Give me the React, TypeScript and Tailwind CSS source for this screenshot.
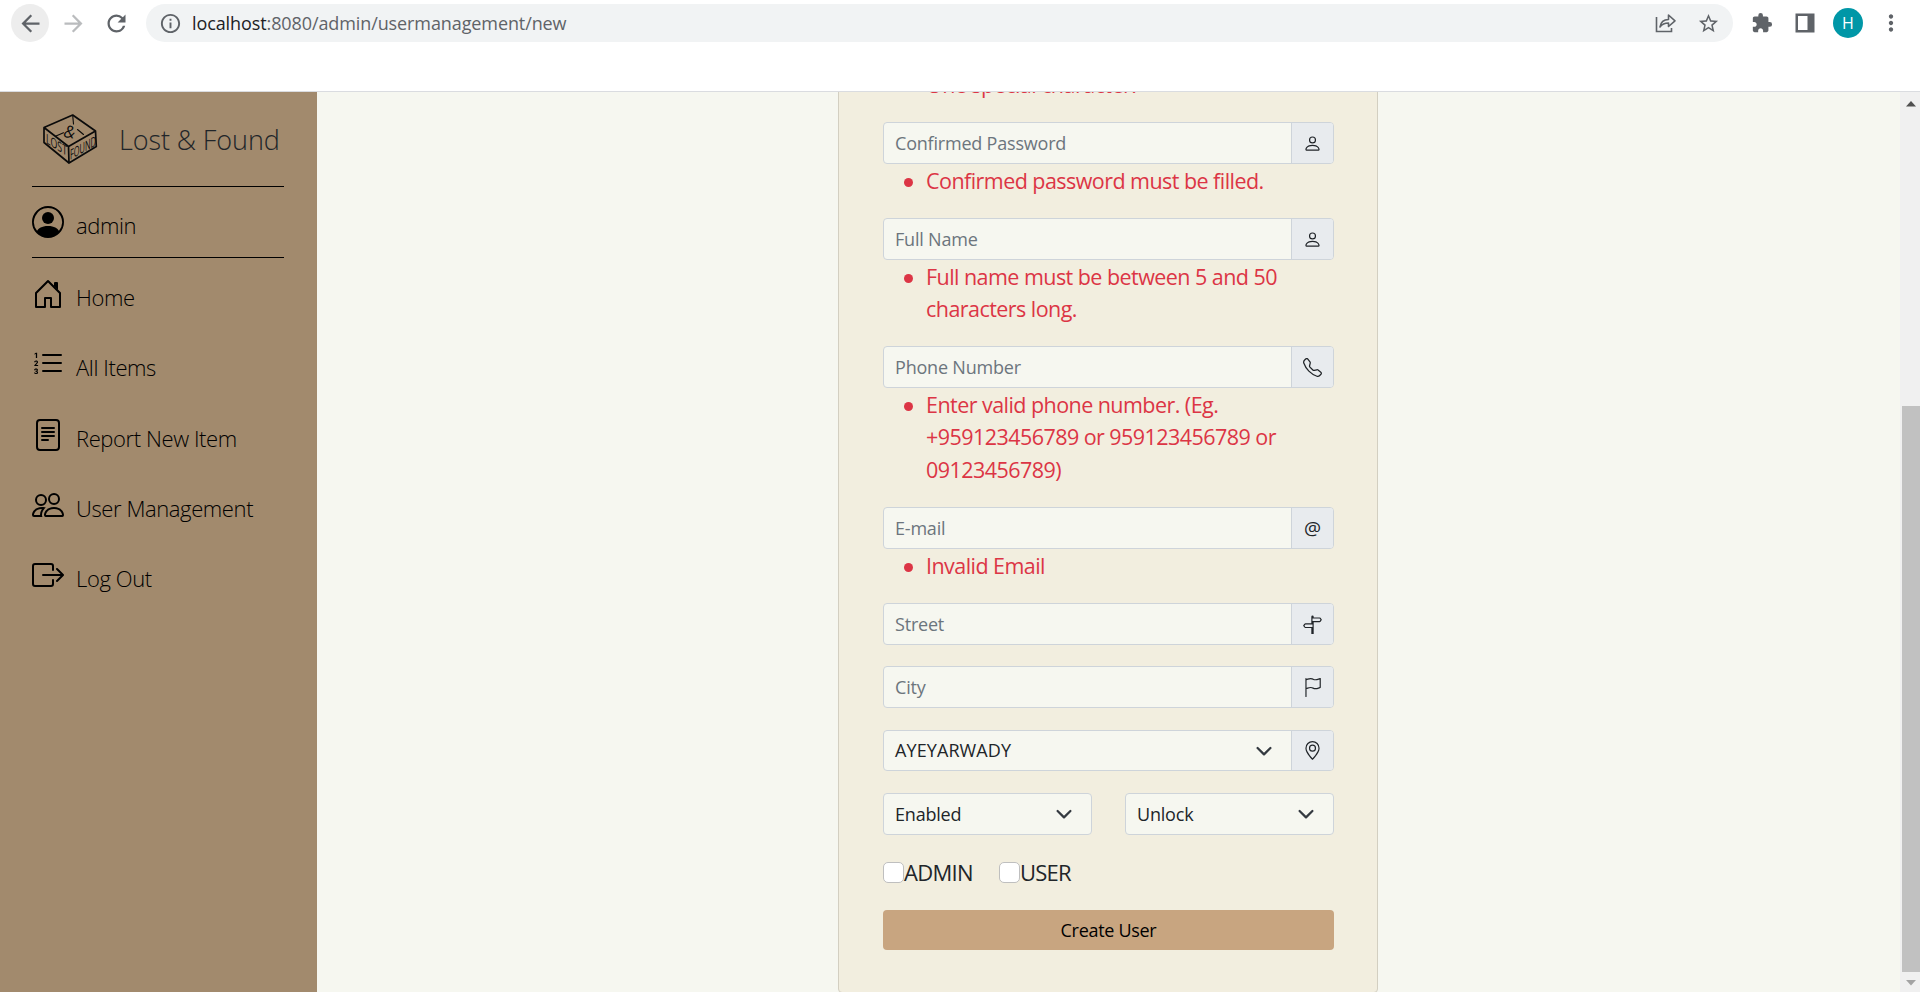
import type { ReactNode } from "react";
import {
  BsPersonCircle, BsListOl, BsFileText, BsPeople, BsBoxArrowRight, BsPerson,
  BsTelephone, BsSignpostSplit, BsFlag, BsGeoAlt,
} from "react-icons/bs";
import { MdArrowBack, MdArrowForward, MdRefresh, MdInfoOutline, MdStarBorder, MdExtension, MdMoreVert } from "react-icons/md";

function ShareIcon() {
  return (
    <svg width="22" height="22" viewBox="0 0 22 22" fill="none" stroke="#5f6368" strokeWidth="1.6">
      <path d="M1.500 5v14.500h15V16" />
      <path d="M5 15c.8-5 4-7.500 8.500-7.500V3l6.500 5.800-6.500 5.700V11c-3.800 0-6.500 1.200-8.500 4z" strokeLinejoin="round" />
    </svg>
  );
}

function SidePanelIcon() {
  return (
    <svg width="20" height="20" viewBox="0 0 20 20" fill="#5f6368">
      <path fillRule="evenodd" d="M.5.5h19v19H.5zM3 3v14h9.500V3z" />
    </svg>
  );
}

function HouseIcon() {
  return (
    <svg width="32" height="32" viewBox="0 0 16 16" fill="currentColor">
      <path d="M7.646 1.146a.5.5 0 0 1 .708 0l6 6a.5.5 0 0 1 .146.354v7a.5.5 0 0 1-.5.5H9.500a.5.5 0 0 1-.5-.5v-4H7v4a.5.5 0 0 1-.5.5H2a.5.5 0 0 1-.5-.5v-7a.5.5 0 0 1 .146-.354l6-6zM2.500 7.707V14H6v-4a.5.5 0 0 1 .5-.5h3a.5.5 0 0 1 .5.5v4h3.500V7.707L8 2.207l-5.500 5.500z" />
      <path d="M13 2.500V6l-2-2V2.500a.5.5 0 0 1 .5-.5h1a.5.5 0 0 1 .5.5z" />
    </svg>
  );
}

function Logo() {
  return (
    <svg width="56" height="52" viewBox="42 113 56 52" overflow="visible" fill="none" stroke="#0b0b0b" strokeWidth="1.700" strokeLinejoin="round" strokeLinecap="round">
      <path d="M44 127.500 72.700 115 95.500 131 68.500 146.500zM44 127.500v15L69 163l-.5-16.500M95.500 131l.8 15.500L69 163" />
      <path d="M72.700 115.500 73.500 124M56 136l7.500-3.200M77.500 129.500l6 5" strokeWidth="1.100" />
      <g fill="#0b0b0b" stroke="none" fontFamily="Open Sans, sans-serif">
        <text transform="translate(63 137) rotate(8)" fontSize="17" fontStyle="italic">&amp;</text>
        <text transform="matrix(1 .62 0 1 46 143)" fontSize="13.500" textLength="21" lengthAdjust="spacingAndGlyphs">LOST</text>
        <text transform="matrix(1 -.56 0 1 70 160)" fontSize="14" textLength="26" lengthAdjust="spacingAndGlyphs">FOUND</text>
      </g>
    </svg>
  );
}

function Chevron() {
  return (
    <svg width="18" height="18" viewBox="0 0 16 16" fill="none" stroke="#343a40" strokeWidth="2" strokeLinecap="round" strokeLinejoin="round">
      <path d="m2.300 5.300 5.700 5.700 5.700-5.700" />
    </svg>
  );
}

function NavItem({ icon, label }: { icon: ReactNode; label: string }) {
  return (
    <a className="flex h-[70.3px] items-start text-black">
      {icon}
      <span className="ml-[12px] mt-[2px] text-[22px] leading-[34px] font-light tracking-[-0.4px] whitespace-nowrap">{label}</span>
    </a>
  );
}

function Addon({ children }: { children: ReactNode }) {
  return <span className="flex w-[42px] shrink-0 items-center justify-center border-l border-[#ced4da] bg-[#e8ebee] text-[19px] text-[#212529]">{children}</span>;
}

function Field({ label, icon }: { label: string; icon: ReactNode }) {
  return (
    <div className="flex h-[42px] overflow-hidden rounded-[4px] border border-[#ced4da] bg-[#f6f7f0]">
      <div className="flex flex-1 items-center pl-[11px] text-[18px] tracking-[-0.2px] text-[#6c757d]">{label}</div>
      <Addon>{icon}</Addon>
    </div>
  );
}

function Errors({ lines }: { lines: string[] }) {
  return (
    <ul className="pt-px pl-[43px] text-[21.500px] leading-[32.300px] tracking-[-0.55px] text-[#dc3545]">
      <li className="relative">
        <span className="absolute -left-[22px] top-[13px] size-[9px] rounded-full bg-[#dc3545]" />
        {lines.map((l) => <div key={l} className="whitespace-nowrap">{l}</div>)}
      </li>
    </ul>
  );
}

function SelectBox({ value }: { value: string }) {
  return (
    <div className="flex h-[42px] w-[209px] items-center justify-between rounded-[4px] border border-[#ced4da] bg-[#f6f7f0] pl-[11px] pr-[18px] text-[18px] tracking-[-0.2px] text-[#212529]">
      {value}
      <Chevron />
    </div>
  );
}

function Check({ label }: { label: string }) {
  return (
    <label className="flex items-center text-[22px] leading-[32px] tracking-[-0.7px] text-[#212529]">
      <span className="size-[21px] rounded-[5px] border border-[#bfbfbf] bg-white" />
      {label}
    </label>
  );
}

export default function App() {
  return (
    <div className="flex h-[992px] w-[1920px] flex-col overflow-hidden bg-white font-['Open_Sans','Noto_Sans',sans-serif]">
      <header className="h-[92px] border-b border-[#dadce0]">
        <div className="flex h-[46px] items-center pl-[11px] text-[#5f6368]">
          <span className="flex size-[38px] items-center justify-center rounded-full bg-[#ededed]"><MdArrowBack size={27} /></span>
          <MdArrowForward size={27} className="ml-[11px] text-[#babcbe]" />
          <MdRefresh size={27} className="ml-[16px]" />
          <div className="ml-[16px] flex h-[38px] w-[1587px] items-center rounded-full bg-[#f1f3f4] pl-[13px] pr-[13px]">
            <MdInfoOutline size={23} />
            <span className="ml-[10px] flex-1 text-[18px] tracking-[-0.1px]"><span className="text-[#202124]">localhost</span>:8080/admin/usermanagement/new</span>
            <ShareIcon />
            <MdStarBorder size={23} className="ml-[20px]" />
          </div>
          <MdExtension size={22} className="ml-[18px]" />
          <span className="ml-[22px]"><SidePanelIcon /></span>
          <span className="ml-[18px] flex size-[30px] items-center justify-center rounded-full bg-[#0097a7] text-[16px] text-white">H</span>
          <MdMoreVert size={26} className="ml-[15px]" />
        </div>
      </header>
      <div className="flex h-[900px]">
        <aside className="w-[317px] shrink-0 bg-[#a28a6d] pl-[32px] pr-[33px]">
          <div className="flex h-[94px] items-start pl-[10px] pt-[21px]">
            <Logo />
            <span className="ml-[21px] mt-[7px] text-[27px] leading-[40px] font-light tracking-[-0.1px] whitespace-nowrap text-[#212529]">Lost &amp; Found</span>
          </div>
          <div className="h-[72px] border-y border-black pt-[19px]">
            <NavItem icon={<BsPersonCircle size={32} />} label="admin" />
          </div>
          <nav className="pt-[20px]">
            <NavItem icon={<HouseIcon />} label="Home" />
            <NavItem icon={<BsListOl size={32} />} label="All Items" />
            <NavItem icon={<BsFileText size={32} />} label="Report New Item" />
            <NavItem icon={<BsPeople size={32} />} label="User Management" />
            <NavItem icon={<BsBoxArrowRight size={32} />} label="Log Out" />
          </nav>
        </aside>
        <main className="flex flex-1 items-start justify-center overflow-hidden bg-[#f6f7f0] pr-px">
          <form className="-mt-[30px] h-[931px] w-[540px] rounded-[4px] border border-[#d3cfc1] bg-[#f2eedf] pt-[5px] pr-[43px] pl-[44px]">
            <div className="h-[54px]"><Errors lines={["One special character."]} /></div>
            <Field label="Confirmed Password" icon={<BsPerson />} />
            <div className="h-[54px]"><Errors lines={["Confirmed password must be filled."]} /></div>
            <Field label="Full Name" icon={<BsPerson />} />
            <div className="h-[86px]"><Errors lines={["Full name must be between 5 and 50", "characters long."]} /></div>
            <Field label="Phone Number" icon={<BsTelephone />} />
            <div className="h-[119px]"><Errors lines={["Enter valid phone number. (Eg.", "+959123456789 or 959123456789 or", "09123456789)"]} /></div>
            <Field label="E-mail" icon={<span className="text-[19px]">@</span>} />
            <div className="h-[54px]"><Errors lines={["Invalid Email"]} /></div>
            <Field label="Street" icon={<BsSignpostSplit />} />
            <div className="mt-[21px]"><Field label="City" icon={<BsFlag />} /></div>
            <div className="mt-[22px] flex h-[41px] overflow-hidden rounded-[4px] border border-[#ced4da] bg-[#f6f7f0]">
              <div className="flex flex-1 items-center justify-between pl-[11px] pr-[18px] text-[18px] tracking-[0.1px] text-[#212529]">AYEYARWADY<Chevron /></div>
              <Addon><BsGeoAlt /></Addon>
            </div>
            <div className="mt-[22px] flex justify-between">
              <SelectBox value="Enabled" />
              <SelectBox value="Unlock" />
            </div>
            <div className="mt-[21px] flex gap-[26px]">
              <Check label="ADMIN" />
              <Check label="USER" />
            </div>
            <button type="button" className="mt-[22px] h-[40px] w-full rounded-[4px] bg-[#c8a580] text-[18px] tracking-[-0.3px] text-black">Create User</button>
          </form>
        </main>
        <div className="flex w-[20px] shrink-0 flex-col items-end bg-[#f0f0f0]">
          <svg width="18" height="314" viewBox="0 0 18 314"><path d="M4 14.500h10L9 9z" fill="#505050" /></svg>
          <div className="h-[566px] w-[18px] bg-[#c1c1c1]" />
          <svg width="18" height="20" viewBox="0 0 18 20"><path d="M4 8h10l-5 5.500z" fill="#a3a3a3" /></svg>
        </div>
      </div>
    </div>
  );
}
